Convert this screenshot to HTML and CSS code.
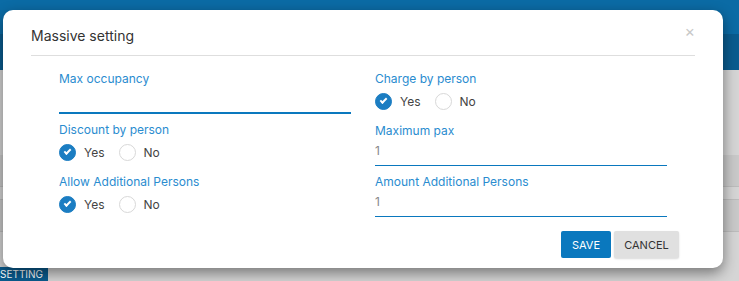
FILE: index.html
```html
<!DOCTYPE html>
<html lang="en">
  <head>
    <meta charset="UTF-8" />
    <meta name="viewport" content="width=device-width, initial-scale=1.0" />
    <title>Massive setting</title>
    <link rel="stylesheet" href="styles.css">
  </head>
  <body>
    <!-- page behind the dialog -->
    <div class="page">
      <header class="topbar"></header>
      <div class="subbar"></div>
      <div class="grid-area">
        <div class="row tall"></div>
        <div class="row shaded"></div>
        <div class="row"></div>
        <div class="row shaded"></div>
        <div class="row fill"></div>
      </div>
      <div class="tab">SETTING</div>
    </div>

    <div class="modal">
      <div class="modal-header">
        <h4 class="modal-title">Massive setting</h4>
        <span class="close">&times;</span>
      </div>

      <div class="modal-body">
        <div class="column">
          <div class="field">
            <label class="field-label">Max occupancy</label>
            <input class="text-input focused" type="text" value="" />
          </div>
          <div class="field radio-field">
            <label class="field-label">Discount by person</label>
            <div class="radios">
              <span class="radio checked"></span><span class="radio-text">Yes</span>
              <span class="radio"></span><span class="radio-text">No</span>
            </div>
          </div>
          <div class="field radio-field">
            <label class="field-label">Allow Additional Persons</label>
            <div class="radios">
              <span class="radio checked"></span><span class="radio-text">Yes</span>
              <span class="radio"></span><span class="radio-text">No</span>
            </div>
          </div>
        </div>

        <div class="column">
          <div class="field radio-field">
            <label class="field-label">Charge by person</label>
            <div class="radios">
              <span class="radio checked"></span><span class="radio-text">Yes</span>
              <span class="radio"></span><span class="radio-text">No</span>
            </div>
          </div>
          <div class="field">
            <label class="field-label">Maximum pax</label>
            <input class="text-input" type="text" value="1" />
          </div>
          <div class="field">
            <label class="field-label">Amount Additional Persons</label>
            <input class="text-input" type="text" value="1" />
          </div>
        </div>
      </div>

      <div class="modal-footer">
        <button class="btn btn-save">Save</button>
        <button class="btn btn-cancel">Cancel</button>
      </div>
    </div>
  </body>
</html>
```

FILE: styles.css
```css
*,
*::before,
*::after {
  box-sizing: border-box;
}

body {
  margin: 0;
  padding: 0;
  font-family: Inter, "Open Sans", sans-serif;
  background: #d5d5d5;
  overflow: hidden;
}

.page {
  height: 281px;
  display: flex;
  flex-direction: column;
}

.topbar {
  height: 34px;
  background: #0b6ba5;
}

.subbar {
  height: 36px;
  background: #0a5c8f;
}

.grid-area {
  flex: 1;
  display: flex;
  flex-direction: column;
}

.row {
  height: 13px;
  border-bottom: 1px solid #bcbcbc;
}

.row.tall {
  height: 85px;
  border-bottom: 0;
}

.row.shaded {
  height: 32px;
  background: #c9c9c9;
}

.row.fill {
  flex: 1;
  border-bottom: 0;
}

.tab {
  height: 14px;
  width: 48px;
  background: #0a5c8f;
  color: #fff;
  font-size: 10px;
  line-height: 15px;
  overflow: hidden;
  white-space: nowrap;
}

/* dialog */
.modal {
  position: absolute;
  left: 3px;
  top: 10px;
  width: 720px;
  height: 258px;
  background: #fff;
  border-radius: 10px;
  box-shadow: 0 5px 14px rgba(0, 0, 0, 0.45);
}

.modal-header {
  position: relative;
  margin: 0 28px;
  padding: 16px 0 9px;
  border-bottom: 1px solid #dedede;
}

.modal-title {
  margin: 0;
  font-size: 14px;
  font-weight: 400;
  line-height: 20px;
  color: #333;
}

.close {
  position: absolute;
  right: 0;
  top: 11px;
  font-size: 16px;
  color: #c8c8c8;
  line-height: 20px;
}

.modal-body {
  display: grid;
  grid-template-columns: 292px 292px;
  column-gap: 24px;
  padding: 15px 56px 0;
}

.field {
  display: flex;
  flex-direction: column;
  margin-bottom: 8px;
}

.radio-field {
  margin-bottom: 12px;
}

.field-label {
  font-size: 12px;
  line-height: 16px;
  color: #2a8ccf;
}

.text-input {
  height: 27px;
  border: 0;
  border-bottom: 1px solid #0a78be;
  padding: 0 0 4px;
  font-family: inherit;
  font-size: 12px;
  color: #888;
  outline: none;
}

.text-input.focused {
  border-bottom-width: 2px;
}

.radios {
  display: flex;
  align-items: center;
  height: 20px;
  margin-top: 4px;
}

.radio {
  width: 17px;
  height: 17px;
  border-radius: 50%;
  border: 1px solid #d8d8d8;
  margin-right: 8px;
  position: relative;
}

.radio.checked {
  background: #1b7dc2;
  border-color: #1b7dc2;
}

/* white tick inside the checked radio */
.radio.checked::after {
  content: "";
  position: absolute;
  left: 4px;
  top: 4px;
  width: 7px;
  height: 4px;
  border-left: 2px solid #fff;
  border-bottom: 2px solid #fff;
  transform: rotate(-45deg);
}

.radio-text {
  font-size: 12px;
  color: #444;
  margin-right: 14px;
}

.modal-footer {
  display: flex;
  justify-content: flex-end;
  gap: 3px;
  padding: 5px 44px 0 0;
}

.btn {
  height: 27px;
  border: 0;
  border-radius: 2px;
  font-family: inherit;
  font-size: 11px;
  font-weight: 400;
  text-transform: uppercase;
  padding: 0;
  cursor: pointer;
}

.btn-save {
  width: 50px;
  background: #0a78be;
  color: #fff;
}

.btn-cancel {
  width: 65px;
  background: #e0e0e0;
  color: #333;
  box-shadow: 0 1px 2px rgba(0, 0, 0, 0.15);
}
```
